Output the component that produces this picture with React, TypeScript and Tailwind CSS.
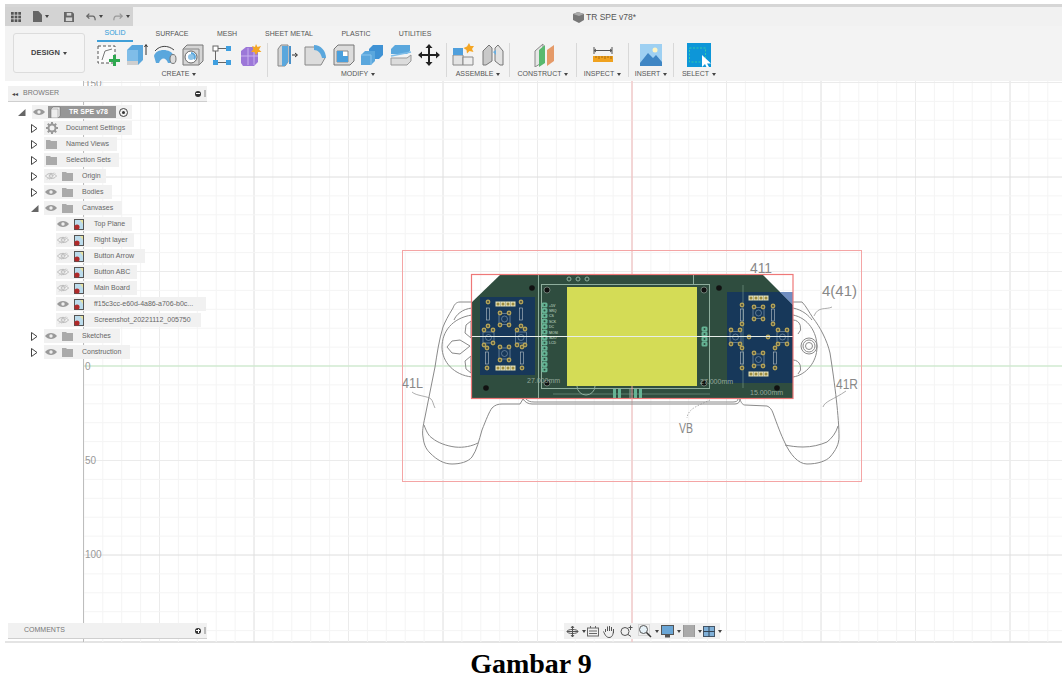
import type { ReactNode } from "react";

const Caret = () => <span className="ml-[3px] inline-block border-x-[2.5px] border-t-[3px] border-x-transparent border-t-[#444] align-middle" />;

const tools: Record<string, ReactNode> = {
  sketch: (
    <>
      <rect x="2" y="3" width="17" height="17" fill="#fafafa" stroke="#555" strokeWidth="1" strokeDasharray="3 2" />
      <path d="M6 17 L9 8 L16 6" fill="none" stroke="#777" />
      <path d="M15 15h4v-4h3v4h4v3h-4v4h-3v-4h-4z" fill="#2ea84f" transform="translate(-2,1)" />
    </>
  ),
  extrude: (
    <>
      <path d="M3 7 L8 2 H19 V17 L14 22 H3 Z" fill="#5aa7dd" />
      <path d="M3 7 H14 V22 H3 Z" fill="#7fbde8" />
      <path d="M3 18 H14 V22 H3 Z" fill="#cfcfcf" />
      <path d="M22 12 V2 M20.500 4 L22 1.500 L23.500 4" stroke="#333" fill="none" />
    </>
  ),
  sweep: (
    <>
      <path d="M1 13 C3 5 18 5 21 13 L20 20 H15 C13 14 8 14 6 20 L3 20 Z" fill="#5aa7dd" />
      <path d="M2 8 C7 2 15 2 21 7" stroke="#444" fill="none" />
      <ellipse cx="20" cy="16" rx="3" ry="4.500" fill="#ddd" stroke="#777" />
    </>
  ),
  hole: (
    <>
      <path d="M2 6 L6 2 H22 V18 L18 22 H2 Z" fill="#d5d5d5" stroke="#777" />
      <path d="M2 6 H18 V22" fill="none" stroke="#888" />
      <circle cx="10" cy="14" r="6" fill="#fff" stroke="#666" />
      <path d="M10 14 V9 A5 5 0 0 1 14 17 Z" fill="#5aa7dd" />
      <circle cx="10" cy="14" r="3" fill="#8fc4e8" />
    </>
  ),
  pattern: (
    <>
      <rect x="3" y="3" width="5" height="5" fill="#fff" stroke="#666" />
      <rect x="16" y="3" width="5" height="5" fill="#3f9fe0" />
      <rect x="3" y="17" width="5" height="5" fill="#3f9fe0" />
      <rect x="16" y="17" width="5" height="5" fill="#3f9fe0" />
      <path d="M8 5.500H16 M5.500 8V17 M8 19.500H16" stroke="#666" />
    </>
  ),
  form: (
    <>
      <path d="M3 8 L8 4 H20 V19 L16 23 H5 L3 20 Z" fill="#9c77d8" />
      <path d="M3 13 H20 M10 5 V22 M16 5 V22" stroke="#c9b2ee" />
      <path d="M18 1 L19.500 4 L23 3 L21 6.500 L23.500 9 L20 9 L18 12 L16.500 9 L13 9 L15.500 6 L14 3 L17 4 Z" fill="#f5a623" />
    </>
  ),
  pressPull: (
    <>
      <path d="M3 6 L6 2 H13 V19 L10 23 H3 Z" fill="#d4d4d4" stroke="#888" />
      <path d="M7 3 H13 V19 L10 23 H7 Z" fill="#5aa7dd" />
      <path d="M17 12 H22 M20 10 L22.500 12 L20 14" stroke="#333" fill="none" />
      <rect x="14" y="3" width="2" height="18" fill="#4a90c8" />
    </>
  ),
  fillet: (
    <>
      <path d="M2 4 H11 C18 4 22 10 22 15 L18 22 H2 Z" fill="#dcdcdc" stroke="#888" />
      <path d="M11 2 C18 2 23 8 23 15 L19 15 C18 10 15 7 11 7 Z" fill="#5aa7dd" />
    </>
  ),
  shell: (
    <>
      <path d="M2 6 L6 2 H22 V18 L18 22 H2 Z" fill="#dcdcdc" stroke="#777" />
      <path d="M5 8 H16 V19 H5 Z" fill="#fff" stroke="#888" />
      <path d="M5 8 H11 V13 H16 V19 H5 Z" fill="#4a9fdc" />
    </>
  ),
  combine: (
    <>
      <path d="M9 6 L13 2 H23 V12 L19 16 H9 Z" fill="#3f92d4" />
      <path d="M1 12 L5 8 H15 V18 L11 22 H1 Z" fill="#5aa7dd" />
      <path d="M1 12 H11 V22" fill="none" stroke="#8cc6ee" />
    </>
  ),
  offset: (
    <>
      <path d="M2 6 L6 2 H21 V8 L18 11 H2 Z" fill="#5aa7dd" />
      <path d="M2 13 L22 9" stroke="#7fbde8" strokeWidth="1.500" />
      <path d="M2 15 H18 L22 12 V18 L18 22 H2 Z" fill="#dcdcdc" stroke="#999" />
    </>
  ),
  move: (
    <path
      d="M12 1 L15.500 5 H13 V11 H19 V8.500 L23 12 L19 15.500 V13 H13 V19 H15.500 L12 23 L8.500 19 H11 V13 H5 V15.500 L1 12 L5 8.500 V11 H11 V5 H8.500 Z"
      fill="#222"
    />
  ),
  assemble: (
    <>
      <path d="M2 12 H12 V22 H2 Z" fill="#e3e3e3" stroke="#888" />
      <path d="M12 14 H22 V22 H12 Z" fill="#eee" stroke="#888" />
      <path d="M2 5 H12 V12 H2 Z" fill="#4f9fdc" />
      <path d="M18 0 L19.500 3 L23 3 L21 6 L22.500 9 L18.500 8 L16 10.500 L15.500 7 L12.500 5 L16 3.500 Z" fill="#f5a623" />
    </>
  ),
  joint: (
    <>
      <path d="M2 8 L8 2 L11 5 V18 L5 22 H2 Z" fill="#c9c9c9" stroke="#777" />
      <path d="M22 8 L17 2 L14 5 V18 L19 22 H22 Z" fill="#e2e2e2" stroke="#777" />
      <path d="M12 9 L15 7 V12 Z" fill="#6aaede" />
    </>
  ),
  construct: (
    <>
      <path d="M4 8 L12 1 V19 L4 24 Z" fill="#e6e6e6" stroke="#888" />
      <path d="M8 7 L14 2 V20 L8 24 Z" fill="#58b96f" />
      <path d="M16 7 L23 2 V18 L16 23 Z" fill="#e59a68" />
    </>
  ),
  inspect: (
    <>
      <path d="M3 4 V11 M21 4 V11 M3 7.500 H21 M5 6 L3 7.500 L5 9 M19 6 L21 7.500 L19 9" stroke="#555" fill="none" />
      <rect x="2" y="13" width="20" height="6" fill="#f0a21f" />
      <path d="M5 13v2 M8 13v3 M11 13v2 M14 13v3 M17 13v2 M20 13v3" stroke="#a86d10" />
    </>
  ),
  insert: (
    <>
      <rect x="1" y="1" width="22" height="22" fill="#9ed0f2" />
      <circle cx="16" cy="7" r="2.500" fill="#fff4c2" />
      <path d="M1 20 L9 10 L14 15 L17 12 L23 19 V23 H1 Z" fill="#3f86c4" />
    </>
  ),
  select: (
    <>
      <rect x="0" y="0" width="24" height="24" fill="#0d96d8" />
      <rect x="2.500" y="5" width="16" height="14" fill="none" stroke="#35c9a8" strokeDasharray="2 1.500" />
      <path d="M15 12 V24 L18 21 L20 25 L22 24 L20 20.500 L24 20.500 Z" fill="#fff" />
    </>
  ),
};

function Group({ label, width, slot, items }: { label: string; width: number; slot: number; items: string[] }) {
  return (
    <div className="flex shrink-0 flex-col items-center" style={{ width }}>
      <div className="flex h-[26px] items-center">
        {items.map((t) => (
          <div key={t} className="flex justify-center" style={{ width: slot }}>
            <svg width="24" height="24" viewBox="0 0 24 24" className="shrink-0 overflow-hidden">
              {tools[t]}
            </svg>
          </div>
        ))}
      </div>
      <div className="mt-[1px] flex h-[10px] items-center whitespace-nowrap text-[7px] text-[#555]">
        {label}
        <Caret />
      </div>
    </div>
  );
}

const Sep = () => <div className="mt-[1px] h-[34px] w-px shrink-0 bg-[#d8d8d8]" />;

const tabs = [
  { name: "SOLID", w: 36 },
  { name: "SURFACE", w: 78 },
  { name: "MESH", w: 32 },
  { name: "SHEET METAL", w: 92 },
  { name: "PLASTIC", w: 42 },
  { name: "UTILITIES", w: 76 },
];

function Toolbar() {
  return (
    <div className="flex h-[55px] bg-[#f3f3f3] pl-[8px]">
      <div className="mr-[8px] mt-[7px] flex h-[40px] w-[72px] items-center justify-center rounded-[3px] border border-[#dcdcdc] bg-[#f5f5f5] text-[7.5px] font-bold text-[#444]">
        DESIGN
        <Caret />
      </div>
      <div className="flex flex-col">
        <div className="flex h-[16px] pl-[4px]">
          {tabs.map((t) => (
            <div
              key={t.name}
              className={
                t.name === "SOLID"
                  ? "flex h-[16px] items-center justify-center border-b-2 border-[#3f9fd8] text-[7px] text-[#2d9ad8]"
                  : "flex h-[16px] items-center justify-center text-[7px] text-[#555]"
              }
              style={{ width: t.w }}
            >
              {t.name}
            </div>
          ))}
        </div>
        <div className="flex items-start">
          <Group label="CREATE" width={172} slot={28.5} items={["sketch", "extrude", "sweep", "hole", "pattern", "form"]} />
          <div className="w-[2px]" />
          <Sep />
          <div className="w-[4px]" />
          <Group label="MODIFY" width={172} slot={28.5} items={["pressPull", "fillet", "shell", "combine", "offset", "move"]} />
          <div className="w-[2px]" />
          <Sep />
          <Group label="ASSEMBLE" width={62} slot={30} items={["assemble", "joint"]} />
          <Sep />
          <Group label="CONSTRUCT" width={66} slot={66} items={["construct"]} />
          <Sep />
          <Group label="INSPECT" width={51} slot={51} items={["inspect"]} />
          <Sep />
          <Group label="INSERT" width={44} slot={44} items={["insert"]} />
          <Sep />
          <Group label="SELECT" width={50} slot={50} items={["select"]} />
        </div>
      </div>
    </div>
  );
}

function TopBar() {
  return (
    <div className="flex h-[19px] bg-[#f1f1f1]">
      <div className="flex w-[128px] items-center bg-[#d3d3d3] pl-[6px]">
        <svg width="10" height="10" viewBox="0 0 11 11" fill="#555">
          {[0, 4, 8].map((x) => [0, 4, 8].map((y) => <rect key={`${x}${y}`} x={x} y={y} width="3" height="3" />))}
        </svg>
        <svg width="9" height="11" viewBox="0 0 10 12" fill="#666" className="ml-[12px]">
          <path d="M0 0 H6 L10 4 V12 H0 Z" />
        </svg>
        <Caret />
        <svg width="10" height="10" viewBox="0 0 11 11" className="ml-[15px]">
          <path d="M0 0 H9 L11 2 V11 H0 Z" fill="#666" />
          <rect x="3" y="1" width="5" height="3" fill="#d3d3d3" />
          <rect x="2" y="6" width="7" height="4" fill="#d3d3d3" />
        </svg>
        <svg width="10" height="10" viewBox="0 0 12 10" className="ml-[12px]" fill="none" stroke="#666" strokeWidth="1.500">
          <path d="M4 1 L1 4 L4 7 M1 4 H8 C10 4 11 6 11 9" />
        </svg>
        <Caret />
        <svg width="10" height="10" viewBox="0 0 12 10" className="ml-[10px]" fill="none" stroke="#999" strokeWidth="1.500">
          <path d="M8 1 L11 4 L8 7 M11 4 H4 C2 4 1 6 1 9" />
        </svg>
        <Caret />
      </div>
      <div className="ml-[440px] flex items-center gap-[2px] pt-[2px] text-[8.5px] text-[#555]">
        <svg width="11" height="11" viewBox="0 0 11 11">
          <path d="M0 2 L5 0 L11 2 V8 L6 11 L0 8 Z" fill="#777" />
          <path d="M0 2 L6 4 L11 2 L5 0 Z" fill="#aaa" />
        </svg>
        <span>TR SPE v78*</span>
      </div>
    </div>
  );
}

function Eye({ off }: { off?: boolean }) {
  return (
    <svg width="12" height="8" viewBox="0 0 12 8" className="shrink-0">
      {off ? (
        <>
          <path d="M0.500 4 C3 0.500 9 0.500 11.500 4 C9 7.500 3 7.500 0.500 4 Z" fill="none" stroke="#bbb" />
          <circle cx="6" cy="4" r="1.800" fill="none" stroke="#bbb" />
          <path d="M2 7.500 L9 0.500 M4 7.500 L10.500 1.500" stroke="#ccc" />
        </>
      ) : (
        <>
          <path d="M0 4 C3 0 9 0 12 4 C9 8 3 8 0 4 Z" fill="#999" />
          <circle cx="6" cy="4" r="1.700" fill="#eee" />
        </>
      )}
    </svg>
  );
}

const Folder = () => (
  <svg width="11" height="9" viewBox="0 0 11 9" className="shrink-0">
    <path d="M0 0 H4 L5 1 H11 V9 H0 Z" fill="#aaa" />
  </svg>
);

const Gear = () => (
  <svg width="12" height="12" viewBox="0 0 12 12" className="shrink-0">
    <circle cx="6" cy="6" r="3.500" fill="none" stroke="#999" strokeWidth="2" />
    <path d="M6 0 V2.500 M6 9.500 V12 M0 6 H2.500 M9.500 6 H12 M1.800 1.800 L3.500 3.500 M8.500 8.500 L10.200 10.200 M1.800 10.200 L3.500 8.500 M8.500 3.500 L10.200 1.800" stroke="#999" strokeWidth="2" />
  </svg>
);

const CanvasThumb = () => (
  <svg width="10" height="11" viewBox="0 0 10 11" className="shrink-0">
    <rect width="10" height="11" fill="#555" />
    <rect x="1" y="1" width="8" height="9" fill="#bcdcec" />
    <path d="M6 1 H9 V5 Z" fill="#e8e2a0" />
    <circle cx="3" cy="8" r="2.600" fill="#b02a2a" />
  </svg>
);

const Closed = () => (
  <svg width="7" height="9" viewBox="0 0 7 9" className="shrink-0">
    <path d="M0.500 0.500 L6 4.500 L0.500 8.500 Z" fill="#fff" stroke="#444" />
  </svg>
);

const Open = () => (
  <svg width="8" height="7" viewBox="0 0 8 7" className="shrink-0">
    <path d="M7.500 0 V7 H0 Z" fill="#666" />
  </svg>
);

type Kind = "gear" | "folder" | "both" | "bothOff";

function FolderRow({ label, right, kind, open }: { label: string; right: number; kind: Kind; open?: boolean }) {
  return (
    <div className="flex h-4 items-center pl-[14px]">
      <div className="flex w-[15px] justify-start pl-[9px]">{open ? <Open /> : <Closed />}</div>
      <div className="ml-[7px] flex h-[14px] items-center bg-[#f1f1f1] pl-[1px]" style={{ width: right - 44 }}>
        {kind === "gear" && (
          <div className="flex w-[21px] justify-start pl-[1px]">
            <Gear />
          </div>
        )}
        {kind === "folder" && (
          <div className="flex w-[21px] justify-start pl-[1px]">
            <Folder />
          </div>
        )}
        {(kind === "both" || kind === "bothOff") && (
          <>
            <div className="flex w-[12px] justify-center">
              <Eye off={kind === "bothOff"} />
            </div>
            <div className="ml-[5px] flex w-[11px] justify-center">
              <Folder />
            </div>
            <div className="w-[9px]" />
          </>
        )}
        <span className="whitespace-nowrap text-[7px] text-[#666]">{label}</span>
      </div>
    </div>
  );
}

function CanvasRow({ label, right, off }: { label: string; right: number; off?: boolean }) {
  return (
    <div className="flex h-4 items-center pl-[48px]">
      <div className="flex h-[14px] items-center bg-[#f1f1f1] pl-[1px]" style={{ width: right - 56 }}>
        <Eye off={off} />
        <div className="ml-[5px]">
          <CanvasThumb />
        </div>
        <span className="ml-[10px] whitespace-nowrap text-[7px] text-[#666]">{label}</span>
      </div>
    </div>
  );
}

function PanelEnd({ minus }: { minus?: boolean }) {
  return (
    <div className="flex items-center gap-[3px]">
      <div className="flex h-[6px] w-[6px] items-center justify-center rounded-full bg-[#333]">
        <div className="h-px w-[4px] bg-white" />
        {!minus && <div className="absolute h-[4px] w-px bg-white" />}
      </div>
      <div className="h-[7px] w-[2px] bg-[#bbb]" />
    </div>
  );
}

function Browser() {
  return (
    <div className="absolute left-[3px] top-[5px] w-[199px]">
      <div className="flex h-[16px] items-center justify-between border-b border-[#cfcfcf] bg-[#f1f1f1] pl-[4px] pr-[1px]">
        <div className="flex items-center">
          <span className="text-[6px] leading-none text-[#444]">◂◂</span>
          <span className="ml-[5px] text-[7px] text-[#777]">BROWSER</span>
        </div>
        <PanelEnd minus />
      </div>
      <div className="mt-[2px] flex flex-col">
        <div className="flex h-4 items-center pl-[10px]">
          <Open />
          <div className="ml-[6px] flex h-[14px] w-[100px] items-center bg-[#f1f1f1] pl-[1px]">
            <Eye />
            <div className="ml-[3px] flex h-[12px] w-[68px] items-center bg-[#979797]">
              <svg width="12" height="12" viewBox="0 0 12 12" className="ml-[2px] shrink-0">
                <path d="M1 3 L3 1 H10 V10 L8 12 H1 Z" fill="#eee" stroke="#666" strokeWidth="0.500" />
                <path d="M1 3 H8 V12" fill="none" stroke="#888" strokeWidth="0.500" />
              </svg>
              <span className="ml-[7px] whitespace-nowrap text-[7px] font-bold text-white">TR SPE v78</span>
            </div>
            <div className="ml-[3px] flex h-[9px] w-[9px] items-center justify-center rounded-full border border-[#444]">
              <div className="h-[3px] w-[3px] rounded-full bg-[#333]" />
            </div>
          </div>
        </div>
        <FolderRow label="Document Settings" right={132} kind="gear" />
        <FolderRow label="Named Views" right={117} kind="folder" />
        <FolderRow label="Selection Sets" right={119} kind="folder" />
        <FolderRow label="Origin" right={106} kind="bothOff" />
        <FolderRow label="Bodies" right={112} kind="both" />
        <FolderRow label="Canvases" right={122} kind="both" open />
        <CanvasRow label="Top Plane" right={132} />
        <CanvasRow label="Right layer" right={134} off />
        <CanvasRow label="Button Arrow" right={145} off />
        <CanvasRow label="Button ABC" right={137} off />
        <CanvasRow label="Main Board" right={137} off />
        <CanvasRow label="ff15c3cc-e60d-4a86-a706-b0c..." right={206} />
        <CanvasRow label="Screenshot_20221112_005750" right={201} off />
        <FolderRow label="Sketches" right={120} kind="both" />
        <FolderRow label="Construction" right={130} kind="both" />
      </div>
    </div>
  );
}

function Comments() {
  return (
    <div className="absolute bottom-[2px] left-[3px] flex h-[16px] w-[199px] items-center justify-between border-b border-[#cfcfcf] bg-[#f1f1f1] pl-[16px] pr-[1px]">
      <span className="text-[7px] text-[#777]">COMMENTS</span>
      <div className="relative flex items-center">
        <PanelEnd />
      </div>
    </div>
  );
}

function NavSlot({ w, caret, children }: { w: number; caret?: boolean; children: ReactNode }) {
  return (
    <div className="flex shrink-0 items-center" style={{ width: w }}>
      {children}
      {caret && <Caret />}
    </div>
  );
}

function NavBar() {
  return (
    <div className="absolute bottom-[2px] left-[559px] flex h-[16px] w-[156px] items-center bg-[#f0f0f0] pl-[2px]">
      <NavSlot w={21} caret>
        <svg width="13" height="13" viewBox="0 0 13 13" fill="none" stroke="#555">
          <path d="M6.500 1 V12 M1 6.500 H12 M5 3 L6.500 1 L8 3 M5 10 L6.500 12 L8 10" />
          <ellipse cx="6.500" cy="6.500" rx="5.500" ry="2" />
        </svg>
      </NavSlot>
      <NavSlot w={16}>
        <svg width="12" height="12" viewBox="0 0 12 12" fill="none" stroke="#666">
          <rect x="0.500" y="3" width="11" height="8" />
          <path d="M2 6 H10 M2 8.500 H10 M3.500 1 V3 M8.500 1 V3" />
        </svg>
      </NavSlot>
      <NavSlot w={17}>
        <svg width="12" height="13" viewBox="0 0 12 13" fill="none" stroke="#555">
          <path d="M2.500 7 V4 M4.500 6 V1.500 M6.500 6 V1 M8.500 6 V2 M10.500 8 V4 C10.500 10 9 12.500 6 12.500 C3.500 12.500 2 10 0.500 6.500" />
        </svg>
      </NavSlot>
      <NavSlot w={18}>
        <svg width="13" height="12" viewBox="0 0 13 12" fill="none" stroke="#555">
          <circle cx="5" cy="6.500" r="4" />
          <path d="M8 9.500 L11 11.500 M10.500 0.500 V5 M8.500 2.500 H12.500" />
        </svg>
      </NavSlot>
      <NavSlot w={23} caret>
        <svg width="14" height="14" viewBox="0 0 14 14" fill="none" className="shrink-0">
          <rect x="0.500" y="0.500" width="11" height="11" stroke="#bbb" strokeDasharray="1 1" />
          <circle cx="5.500" cy="5.500" r="4" stroke="#555" fill="#e6f1f7" />
          <path d="M8.500 8.500 L13 13" stroke="#333" strokeWidth="1.500" />
        </svg>
      </NavSlot>
      <NavSlot w={22} caret>
        <svg width="13" height="13" viewBox="0 0 13 13" className="shrink-0">
          <rect x="0.500" y="0.500" width="12" height="9" fill="#6aa6d6" stroke="#555" />
          <rect x="4" y="10" width="5" height="2.500" fill="#555" />
        </svg>
      </NavSlot>
      <NavSlot w={20} caret>
        <svg width="12" height="12" viewBox="0 0 12 12" className="shrink-0">
          <rect width="12" height="12" fill="#999" />
          <path d="M2 0 V12 M4 0 V12 M6 0 V12 M8 0 V12 M10 0 V12" stroke="#ddd" strokeWidth="0.500" />
        </svg>
      </NavSlot>
      <NavSlot w={18} caret>
        <svg width="12" height="11" viewBox="0 0 12 11" className="shrink-0">
          <rect x="0.500" y="0.500" width="11" height="10" fill="#7fb0d8" stroke="#456" />
          <path d="M6 0 V11 M0 5.500 H12" stroke="#345" />
        </svg>
      </NavSlot>
    </div>
  );
}

const lines = Array.from({ length: 60 }, (_, i) => i);

function lineColor(n: number) {
  const m = ((n % 10) + 10) % 10;
  if (m === 0) return "#dedede";
  if (m === 5) return "#ebebeb";
  return "#f4f4f4";
}

const gridX = lines.map((i) => i - 30).filter((n) => 632 + n * 18.9 > 83 && 632 + n * 18.9 < 1062);
const gridY = lines.map((i) => i - 20).filter((n) => 366 + n * 18.9 > 81 && 366 + n * 18.9 < 642);

const leftPads = [
  [488, 302], [488, 326], [521, 302], [521, 326], [500, 313], [509, 313], [500, 325], [509, 325],
  [484, 330], [493, 330], [484, 345], [493, 343], [517, 330], [525, 329], [517, 345], [525, 345],
  [500, 347], [509, 347], [500, 360], [509, 360], [487, 348], [487, 368], [522, 347], [522, 368],
];
const rightPads = [
  [742, 305], [742, 324], [773, 306], [773, 324], [754, 307], [763, 307], [754, 319], [763, 319],
  [731, 330], [740, 330], [731, 344], [740, 344], [778, 330], [787, 330], [778, 344], [787, 344],
  [749, 337], [768, 337], [754, 353], [763, 353], [754, 366], [763, 366], [742, 348], [742, 368],
  [775, 348], [775, 368],
];
const headers = [
  [498, 304], [503, 304], [508, 304], [513, 304], [498, 368], [503, 368], [508, 368], [513, 368],
  [751, 298], [756, 298], [761, 298], [766, 298], [751, 374], [756, 374], [761, 374], [766, 374],
];
const holes = [[532, 288], [486, 388], [719, 288], [777, 388]];
const ringHoles = [[547, 290], [547, 383], [704, 290], [704, 383]];
const pinLabels = ["+5V", "SRQ", "CS", "SCK", "DC", "MOSI", "SDO", "LCD"];
const resistors = [[488, 314], [521, 314], [487, 358], [522, 358], [742, 315], [773, 315], [742, 358], [775, 358]];
const switches = [[504.500, 319], [488.500, 337.500], [521, 337.500], [504.500, 353.500], [758.500, 313], [735.500, 337], [782.500, 337], [758.500, 359.500]];

function Drawing() {
  return (
    <svg width="1057" height="561" viewBox="5 81 1057 561" className="absolute inset-0">
      {gridX.map((n) => (
        <line key={n} x1={632 + n * 18.9} x2={632 + n * 18.9} y1="81" y2="642" stroke={lineColor(n)} />
      ))}
      {gridY.map((n) => (
        <line key={n} x1="83" x2="1062" y1={366 + n * 18.9} y2={366 + n * 18.9} stroke={lineColor(n)} />
      ))}
      <line x1="632" x2="632" y1="81" y2="642" stroke="#f7bcbc" />
      <line x1="83" x2="1062" y1="366" y2="366" stroke="#c9efc9" />
      <line x1="83.500" x2="83.500" y1="81" y2="642" stroke="#bdbdbd" />
      <g fontFamily="'Liberation Sans', sans-serif" fontSize="10" fill="#999">
        <text x="85" y="87">150</text>
        <text x="85" y="370">0</text>
        <text x="85" y="464">50</text>
        <text x="85" y="558">100</text>
      </g>

      <rect x="402.500" y="250.500" width="459" height="231" fill="none" stroke="#f4a5a5" />

      {/* controller outline */}
      <g fill="none" stroke="#8a8a8a" strokeWidth="1">
        <path d="M472 302 H460 C456 302 454 305 453 308 C448 316 445 322 443 327 C439 340 437 354 435 367 L425 417 C423 426 422 432 423 437 C424 446 427 450 430 453 C437 460 444 464 452 464 C460 464 468 462 472 457 C477 450 479 440 482 430 C486 420 489 412 492 408 C495 405 498 404 502 404 H520 L523 399" />
        <path d="M424 425 C427 433 429 436 432 438 C438 443 447 446 455 447 C464 448 472 446 478 443" />
        <path d="M472 315 C452 318 442 332 442 347 C442 362 454 375 472 377" />
        <path d="M472 308 C462 309 456 315 454 320" />
        <path d="M447 347 L452 341 L460 340 L470 346 L460 354 L452 353 Z M466 325 L471 321 V338 L465 333 Z M466 369 L471 373 V356 L465 361 Z" />
        <path d="M523 399 C525 402 528 404 532 404 H735 C738 404 740 402 740 399" />
        <path d="M526 399 C528 401 530 402 534 402 H733 C736 402 738 401 738 399" />
        <path d="M740 399 C741 403 743 405 745 405 L767 406 C770 407 772 410 773 413 C777 424 781 435 785 443 C790 454 798 464 807 464 C818 464 826 461 830 457 C836 450 839 444 839 437 C839 418 835 385 830 353 C827 340 820 327 813 318 C809 312 806 306 802 302 H793" />
        <path d="M838 426 C836 433 832 438 827 442 C820 445 812 447 803 447 C796 447 790 446 785 445" />
        <path d="M793 315 C808 318 817 332 817 347 C817 362 806 375 793 377" />
        <path d="M793 308 C803 310 809 316 812 320" />
        <circle cx="809" cy="346" r="8" />
        <circle cx="809" cy="346" r="6" />
        <circle cx="809" cy="346" r="3.500" />
        <path d="M793 320 A8 8 0 0 1 798 334 M793 360 A8 8 0 0 1 798 374" />
        <path d="M412 392 C416 396 428 396 431 399 C433 401 433 404 435 408" strokeWidth="0.700" />
        <path d="M814 316 C818 306 826 310 832 307" strokeWidth="0.700" />
        <path d="M823 407 C825 401 833 400 846 391" strokeWidth="0.700" />
        <path d="M710 400 C700 405 688 408 687 418" strokeWidth="0.700" strokeDasharray="1.500 1.500" />
      </g>
      <g fontFamily="'Liberation Sans', sans-serif" fontSize="14" fill="#888">
        <text x="750" y="273" textLength="22" lengthAdjust="spacingAndGlyphs">411</text>
        <text x="822" y="296" textLength="35" lengthAdjust="spacingAndGlyphs">4(41)</text>
        <text x="402" y="388" textLength="21" lengthAdjust="spacingAndGlyphs">41L</text>
        <text x="836" y="389" textLength="22" lengthAdjust="spacingAndGlyphs">41R</text>
        <text x="679" y="433" textLength="14" lengthAdjust="spacingAndGlyphs">VB</text>
      </g>

      {/* pcb */}
      <path d="M500 275 H763 L793 305 V399 H471 V303 Z" fill="#2f4d3f" />
      <rect x="480" y="297" width="55" height="78" fill="#17385a" />
      <path d="M727 292 H780 L793 305 V383 H727 Z" fill="#17385a" />
      <path d="M780 292 H793 V305 Z" fill="#6f8dc0" />
      <g fill="none" stroke="#8fae9d">
        <line x1="538.500" x2="538.500" y1="275" y2="399" />
        <line x1="693.500" x2="693.500" y1="275" y2="284" />
        <rect x="541.500" y="284.500" width="168" height="104" />
        <line x1="743" x2="743" y1="285" y2="388" strokeWidth="0.500" />
        <line x1="630" x2="630" y1="388" y2="399" />
        <line x1="553" x2="710" y1="394" y2="394" strokeWidth="0.500" />
        <path d="M577 386 A9 9 0 0 0 595 386" />
      </g>
      {resistors.map(([x, y]) => (
        <rect key={`r${x}${y}`} x={x - 1.500} y={y - 6} width="3" height="12" fill="none" stroke="#b9c4c9" strokeWidth="0.600" />
      ))}
      {switches.map(([x, y]) => (
        <g key={`s${x}${y}`} fill="none" stroke="#8ca3b8" strokeWidth="0.600">
          <rect x={x - 5.500} y={y - 5.500} width="11" height="11" />
          <circle cx={x} cy={y} r="3" />
        </g>
      ))}
      {[...leftPads, ...rightPads].map(([x, y]) => (
        <g key={`p${x}${y}`}>
          <circle cx={x} cy={y} r="2.400" fill="#b3a258" />
          <circle cx={x} cy={y} r="0.900" fill="#39423c" />
        </g>
      ))}
      {headers.map(([x, y]) => (
        <g key={`h${x}${y}`}>
          <rect x={x - 2.500} y={y - 2.500} width="5" height="5" fill="#e4ddb0" />
          <circle cx={x} cy={y} r="1.500" fill="#9a8a3e" />
        </g>
      ))}
      {lines.slice(0, 13).map((i) => (
        <g key={`gp${i}`}>
          <rect x="541.500" y={305 + i * 5.400 - 2.500} width="6" height="5" rx="1.500" fill="#65b394" />
          <circle cx="544.500" cy={305 + i * 5.400} r="1" fill="#2f4d3f" />
        </g>
      ))}
      {lines.slice(0, 4).map((i) => (
        <g key={`gq${i}`}>
          <rect x="701.500" y={329 + i * 5 - 2.500} width="6" height="5" rx="1.500" fill="#65b394" />
          <circle cx="704.500" cy={329 + i * 5} r="1" fill="#2f4d3f" />
        </g>
      ))}
      {[569, 578, 587].map((x) => (
        <circle key={x} cx={x} cy="279" r="2" fill="#2f4d3f" stroke="#8fae9d" />
      ))}
      {[613, 618, 634, 639].map((x) => (
        <rect key={x} x={x} y="389" width="3" height="9" fill="#65b394" />
      ))}
      {holes.map(([x, y]) => (
        <circle key={`k${x}`} cx={x} cy={y} r="2.800" fill="#111" />
      ))}
      {ringHoles.map(([x, y]) => (
        <circle key={`q${x}${y}`} cx={x} cy={y} r="3" fill="#111" stroke="#b9c9bf" strokeWidth="0.500" />
      ))}
      <g fontFamily="'Liberation Sans', sans-serif" fontSize="3.500" fill="#cfe0d6">
        {pinLabels.map((t, i) => (
          <text key={t} x="549" y={306.500 + i * 5.400}>
            {t}
          </text>
        ))}
      </g>
      <rect x="567" y="287" width="130" height="99" fill="#d4dc56" />
      <line x1="471" x2="793" y1="336.500" y2="336.500" stroke="#e8eee9" />
      <rect x="471.500" y="274.500" width="321.500" height="124" fill="none" stroke="#ee7878" strokeWidth="1.200" />
      <line x1="632" x2="632" y1="386" y2="399" stroke="#e8a0a0" />
      <g fontFamily="'Liberation Sans', sans-serif" fontSize="7" fill="#93a89b">
        <text x="527" y="383">27.000mm</text>
        <text x="700" y="384">27.000mm</text>
        <text x="750" y="395">15.000mm</text>
      </g>
    </svg>
  );
}

export default function App() {
  return (
    <div className="h-[691px] w-[1062px] overflow-hidden bg-white font-['Liberation_Sans',sans-serif]">
      <div className="h-[4px]" />
      <div className="ml-[5px] flex h-[639px] flex-col border-t-[3px] border-[#d6d6d6]">
        <TopBar />
        <Toolbar />
        <div className="relative flex-1 border-b-2 border-[#e4e4e4] bg-white">
          <Drawing />
          <Browser />
          <Comments />
          <NavBar />
        </div>
      </div>
      <div className="mt-[5px] text-center font-['Liberation_Serif',serif] text-[28px] font-bold leading-[32px] text-black">Gambar 9</div>
    </div>
  );
}
